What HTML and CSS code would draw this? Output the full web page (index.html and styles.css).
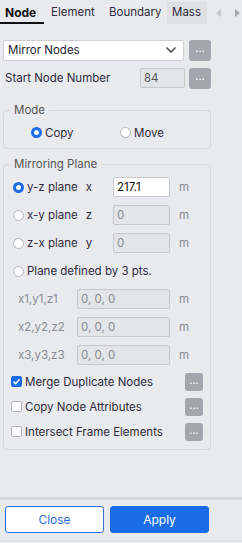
FILE: index.html
```html
<!DOCTYPE html>
<html>
  <head>
    <meta charset="utf8">
    <title>Mirror Nodes</title>
    <link rel="stylesheet" href="styles.css">
  </head>
  <body>

    <div class="tabs">
      <div class="tab active">Node</div>
      <div class="tab element">Element</div>
      <div class="tab boundary">Boundary</div>
      <div class="tab hover">Mass</div>
      <div class="arrows">
        <svg width="8" height="10" viewBox="0 0 8 10"><path d="M6 1 L1 5 L6 9 Z" fill="#c4c6cb"/></svg>
        <svg width="8" height="10" viewBox="0 0 8 10"><path d="M2 1 L7 5 L2 9 Z" fill="#a4a7ad"/></svg>
      </div>
    </div>

    <div class="panel">

      <div class="row top">
        <div class="select">
          <span>Mirror Nodes</span>
          <svg width="12" height="8" viewBox="0 0 12 8"><path d="M1.5 1.5 L6 6 L10.5 1.5" fill="none" stroke="#555" stroke-width="1.6"/></svg>
        </div>
        <div class="more">...</div>
      </div>

      <div class="row start">
        <label class="wide">Start Node Number</label>
        <div class="field disabled short">84</div>
        <div class="more">...</div>
      </div>

      <fieldset class="mode">
        <legend>Mode</legend>
        <div class="radios">
          <span class="opt"><i class="radio on"></i>Copy</span>
          <span class="opt"><i class="radio"></i>Move</span>
        </div>
      </fieldset>

      <fieldset class="plane">
        <legend>Mirroring Plane</legend>

        <div class="line">
          <span class="opt name"><i class="radio on"></i>y-z plane<b>x</b></span>
          <div class="field">217.1</div>
          <span class="unit">m</span>
        </div>
        <div class="line">
          <span class="opt name"><i class="radio"></i>x-y plane<b>z</b></span>
          <div class="field disabled">0</div>
          <span class="unit">m</span>
        </div>
        <div class="line">
          <span class="opt name"><i class="radio"></i>z-x plane<b>y</b></span>
          <div class="field disabled">0</div>
          <span class="unit">m</span>
        </div>
        <div class="line">
          <span class="opt"><i class="radio"></i>Plane defined by 3 pts.</span>
        </div>
        <div class="line pt">
          <span class="coord">x1,y1,z1</span>
          <div class="field disabled long">0, 0, 0</div>
          <span class="unit">m</span>
        </div>
        <div class="line pt">
          <span class="coord">x2,y2,z2</span>
          <div class="field disabled long">0, 0, 0</div>
          <span class="unit">m</span>
        </div>
        <div class="line pt">
          <span class="coord">x3,y3,z3</span>
          <div class="field disabled long">0, 0, 0</div>
          <span class="unit">m</span>
        </div>

        <div class="check first">
          <span class="opt"><i class="box on"><svg width="9" height="9" viewBox="0 0 9 9"><path d="M1.5 4.6 L3.6 6.7 L7.6 2.2" fill="none" stroke="#fff" stroke-width="1.6"/></svg></i>Merge Duplicate Nodes</span>
          <div class="more small">...</div>
        </div>
        <div class="check">
          <span class="opt"><i class="box"></i>Copy Node Attributes</span>
          <div class="more small">...</div>
        </div>
        <div class="check">
          <span class="opt"><i class="box"></i>Intersect Frame Elements</span>
          <div class="more small">...</div>
        </div>
      </fieldset>
    </div>

    <div class="footer">
      <div class="btn close">Close</div>
      <div class="btn apply">Apply</div>
    </div>

  </body>
</html>
```

FILE: styles.css
```css
body {
  margin: 0;
  background: #e9eaee;
  font-family: "Inter", "Noto Sans", sans-serif;
  font-size: 11.5px;
  color: #2f2a3c;
  width: 242px;
  height: 543px;
  overflow: hidden;
  position: relative;
}

.tabs {
  display: flex;
  height: 24px;
  align-items: flex-end;
  gap: 1px;
  font-size: 11.5px;
  white-space: nowrap;
}

.tab {
  flex: none;
  height: 22px;
  line-height: 21px;
  padding: 0 6px;
  box-sizing: border-box;
  overflow: hidden;
}

.tab.active {
  font-weight: bold;
  font-size: 12px;
  padding: 0 5px;
  width: 44px;
  border-bottom: 2px solid #111;
  color: #111;
}

.tab.element {
  width: 57px;
}

.tab.boundary {
  width: 63px;
}

.tab.hover {
  background: #dfe0e4;
  width: 40px;
  padding: 0 5px;
}

.arrows {
  flex: none;
  width: 34px;
  display: flex;
  gap: 10px;
  height: 22px;
  align-items: center;
  padding-left: 7px;
  box-sizing: border-box;
}

.panel {
  padding: 0 3px;
  width: 208px;
}

.row {
  display: flex;
  align-items: center;
  height: 22px;
}

.row.top {
  margin-top: 15px;
  gap: 5px;
}

.row.start {
  margin-top: 6px;
}

.select {
  width: 181px;
  height: 21px;
  box-sizing: border-box;
  background: #fff;
  border: 1px solid #cfd1d5;
  border-radius: 2px;
  display: flex;
  align-items: center;
  justify-content: space-between;
  padding: 0 6px 0 4px;
  color: #221d30;
}

.more {
  flex: none;
  width: 22px;
  height: 21px;
  background: #a3a6ad;
  border-radius: 3px;
  color: #fff;
  text-align: center;
  line-height: 17px;
  font-size: 11px;
}

.more.small {
  width: 18px;
  height: 18px;
  line-height: 14px;
}

label.wide {
  width: 135px;
  padding-left: 2px;
}

.field {
  flex: none;
  width: 57px;
  height: 20px;
  box-sizing: border-box;
  border: 1px solid #c6c8cc;
  border-radius: 2px;
  background: #fff;
  padding-left: 3px;
  line-height: 18px;
  color: #111;
}

.field.disabled {
  background: #e3e5e9;
  color: #8a8c92;
}

.field.short {
  width: 45px;
  margin-right: 4px;
  color: #555;
}

.field.long {
  width: 93px;
}

fieldset {
  margin: 0;
  border: 1px solid #d6d8dc;
  border-radius: 4px;
  padding: 0;
}

legend {
  margin-left: 6px;
  padding: 0 4px;
  color: #555;
  line-height: 14px;
}

fieldset.mode {
  margin-top: 14px;
  height: 46px;
  box-sizing: border-box;
}

.radios {
  display: flex;
  padding-left: 27px;
  height: 31px;
  align-items: center;
}

.radios .opt {
  width: 89px;
}

.opt {
  display: inline-flex;
  align-items: center;
}

.radio {
  flex: none;
  width: 11px;
  height: 11px;
  box-sizing: border-box;
  border-radius: 50%;
  border: 1px solid #b3b5ba;
  background: #fff;
  margin-right: 3px;
}

.radio.on {
  border: 3px solid #1a6ce8;
}

fieldset.plane {
  margin-top: 8px;
  height: 293px;
  box-sizing: border-box;
  padding-top: 2px;
}

.line {
  display: flex;
  align-items: center;
  height: 28px;
  padding-left: 9px;
}

.line.pt {
  padding-left: 14px;
}

.name {
  width: 100px;
}

.name b {
  font-weight: normal;
  margin-left: 8px;
}

.coord {
  width: 59px;
  color: #8a8c92;
}

.unit {
  margin-left: 9px;
  color: #8a8c92;
}

.check {
  display: flex;
  align-items: center;
  justify-content: space-between;
  height: 25px;
  padding-left: 7px;
  width: 192px;
}

.box {
  flex: none;
  width: 11px;
  height: 11px;
  box-sizing: border-box;
  border: 1px solid #b3b5ba;
  border-radius: 2px;
  background: #fff;
  margin-right: 3px;
  display: flex;
  align-items: center;
  justify-content: center;
}

.box.on {
  background: #1a6ce8;
  border-color: #1a6ce8;
}

.footer {
  position: absolute;
  left: 0;
  right: 0;
  top: 497px;
  height: 44px;
  border-top: 3px solid #d6d7db;
  border-bottom: 1px solid #d6d7db;
  display: flex;
  gap: 6px;
  padding: 6px 0 0 5px;
  box-sizing: border-box;
}

.btn {
  width: 99px;
  height: 27px;
  box-sizing: border-box;
  border-radius: 3px;
  text-align: center;
  line-height: 25px;
  font-size: 12px;
}

.btn.close {
  background: #fff;
  border: 1px solid #2d6fdf;
  color: #2d6fdf;
}

.btn.apply {
  background: #1a6ce8;
  border: 1px solid #1a6ce8;
  color: #fff;
}
```
